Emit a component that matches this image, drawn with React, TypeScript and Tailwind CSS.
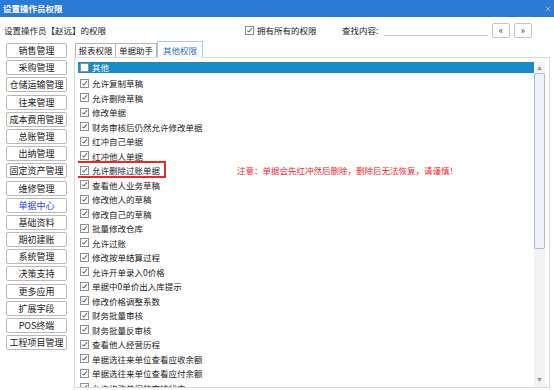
import { X } from 'lucide-react'

const menus = [
  '销售管理',
  '采购管理',
  '仓储运输管理',
  '往来管理',
  '成本费用管理',
  '总账管理',
  '出纳管理',
  '固定资产管理',
  '维修管理',
  '单据中心',
  '基础资料',
  '期初建账',
  '系统管理',
  '决策支持',
  '更多应用',
  '扩展字段',
  'POS终端',
  '工程项目管理',
]

const rights = [
  '允许复制草稿',
  '允许删除草稿',
  '修改单据',
  '财务审核后仍然允许修改单据',
  '红冲自己单据',
  '红冲他人单据',
  '允许删除过账单据',
  '查看他人业务草稿',
  '修改他人的草稿',
  '修改自己的草稿',
  '批量修改仓库',
  '允许过账',
  '修改按单结算过程',
  '允许开单录入0价格',
  '单据中0单价出入库提示',
  '修改价格调整系数',
  '财务批量审核',
  '财务批量反审核',
  '查看他人经营历程',
  '单据选往来单位查看应收余额',
  '单据选往来单位查看应付余额',
  '允许修改单据的审核状态',
]

function Check({ checked = true }: { checked?: boolean }) {
  return (
    <span className="flex h-[9px] w-[9px] shrink-0 items-center justify-center border border-[#8e8f8f] bg-white">
      {checked && (
        <svg viewBox="0 0 9 9" className="h-[9px] w-[9px]">
          <path d="M1.6 4.6 L3.5 6.6 L7.6 1.6" fill="none" stroke="#2a2a2a" strokeWidth="1.2" />
        </svg>
      )}
    </span>
  )
}

export default function App() {
  return (
    <div
      className="relative flex h-[390px] w-[554px] flex-col overflow-hidden bg-white text-[8.5px] leading-none text-[#222]"
      style={{ fontFamily: '"Noto Sans CJK SC", "Noto Sans", sans-serif' }}
    >
      {/* title bar */}
      <div className="flex h-[17px] shrink-0 items-center justify-between bg-[#2b7bd4] pl-[3px] pr-[2px]">
        <span className="font-bold text-white">设置操作员权限</span>
        <X className="h-[8px] w-[8px] text-[#9ab4d8]" strokeWidth={3} />
      </div>

      {/* top row */}
      <div className="flex h-[24px] shrink-0 items-center pl-[4px] pt-[2px]">
        <span className="w-[241px]">设置操作员【赵远】的权限</span>
        <Check />
        <span className="ml-[3px] w-[85px]">拥有所有的权限</span>
        <span className="w-[42px]">查找内容:</span>
        <span className="mt-[10px] h-px w-[104px] bg-[#c8c8c8]" />
        <span className="ml-[4px] flex h-[15px] w-[18px] items-center justify-center rounded-[2px] border border-[#c4c4c4] text-[9px] text-[#333]">«</span>
        <span className="ml-[4px] flex h-[15px] w-[18px] items-center justify-center rounded-[2px] border border-[#c4c4c4] text-[9px] text-[#333]">»</span>
      </div>

      {/* body */}
      <div className="flex min-h-0 flex-1">
        {/* left menu */}
        <div className="flex w-[74px] shrink-0 flex-col gap-[2.2px] pl-[6px] pt-[2px]">
          {menus.map((m) => (
            <div
              key={m}
              className={`flex h-[15px] w-[61px] items-center justify-center rounded-[2px] border border-[#b9b9b9] bg-white text-[9px] ${
                m === '单据中心' ? 'text-[#1f3fe0]' : 'text-[#222]'
              }`}
            >
              {m}
            </div>
          ))}
        </div>

        {/* right area */}
        <div className="flex min-w-0 flex-1 flex-col pb-[2px] pr-[4px]">
          <div className="flex h-[16px] shrink-0 items-end pl-[1px]">
            <div className="flex h-[14px] w-[41px] items-center justify-center border border-b-0 border-[#b5b5b5] bg-white">报表权限</div>
            <div className="flex h-[14px] w-[41px] items-center justify-center border border-b-0 border-l-0 border-[#b5b5b5] bg-white">单据助手</div>
            <div className="relative -mb-px flex h-[17px] w-[46px] items-center justify-center border border-b-0 border-[#a9cbe9] bg-white text-[#2a6cd0]">其他权限</div>
          </div>

          <div className="flex min-h-0 flex-1 border border-[#d9d9d9] pl-[3px] pr-[4px] pt-[4px]">
            {/* list */}
            <div className="min-w-0 flex-1 overflow-hidden">
              <div className="flex h-[11px] items-center gap-[3px] bg-[#1c8ac5] pl-[2px] text-white">
                <Check checked={false} />
                <span>其他</span>
              </div>
              <div className="pt-[3px]">
                {rights.map((r) => (
                  <div key={r} className="relative flex h-[14.5px] items-center pl-[2px]">
                    <Check />
                    <span className={`ml-[3px] ${r === '允许删除过账单据' ? 'w-[145px]' : ''}`}>{r}</span>
                    {r === '允许删除过账单据' && (
                      <>
                        <span className="text-[#f0282d]">注意：单据会先红冲然后删除，删除后无法恢复，请谨慎！</span>
                        <span className="absolute left-[-3px] top-[-2px] h-[17px] w-[91px] border-2 border-[#e42a2a]" />
                      </>
                    )}
                  </div>
                ))}
              </div>
            </div>

            {/* scrollbar */}
            <div className="flex w-[11px] shrink-0 flex-col bg-[#f2f3f5] pb-[4px]">
              <div className="flex h-[11px] items-center justify-center text-[5px] text-[#9a9a9a]">▲</div>
              <div className="h-[176px] rounded-[2px] border border-[#a8b7e6] bg-[#eef1f6]" />
              <div className="flex-1" />
              <div className="flex h-[10px] items-center justify-center text-[5px] text-[#9a9a9a]">▼</div>
            </div>
          </div>
        </div>
      </div>
    </div>
  )
}
